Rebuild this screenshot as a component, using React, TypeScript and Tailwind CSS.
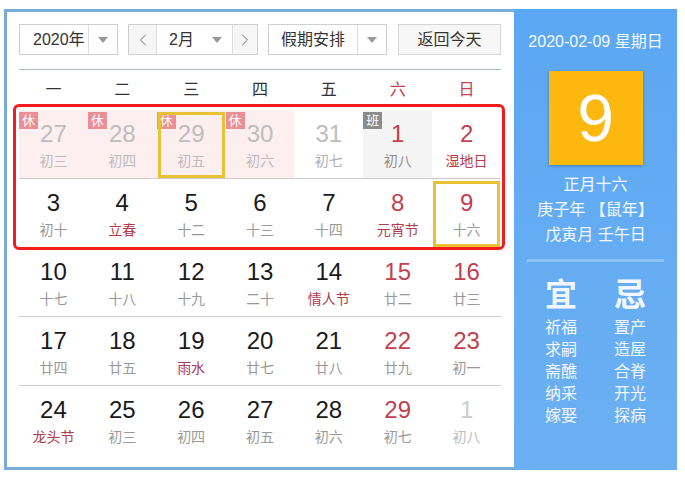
import React from "react";
import { ChevronLeft, ChevronRight } from "lucide-react";

type Cell = {
  d: string;
  l: string;
  num?: string;
  lun?: string;
  bg?: string;
  badge?: "休" | "班";
  sel?: boolean;
};

const G = "text-[#bdbdbd]";
const R = "text-[#c2404f]";
const LR = "text-[#b43a4c]";
const LG = "text-[#999999]";

const rows: Cell[][] = [
  [
    { d: "27", l: "初三", num: G, lun: "text-[#bcbcbc]", bg: "bg-[#fdeef0]", badge: "休" },
    { d: "28", l: "初四", num: G, lun: "text-[#bcbcbc]", bg: "bg-[#fdeef0]", badge: "休" },
    { d: "29", l: "初五", num: G, lun: "text-[#bcbcbc]", bg: "bg-[#fdeef0]", badge: "休", sel: true },
    { d: "30", l: "初六", num: G, lun: "text-[#bcbcbc]", bg: "bg-[#fdeef0]", badge: "休" },
    { d: "31", l: "初七", num: G, lun: "text-[#b0b0b0]" },
    { d: "1", l: "初八", num: R, lun: "text-[#8f8f8f]", bg: "bg-[#f4f4f4]", badge: "班" },
    { d: "2", l: "湿地日", num: R, lun: LR },
  ],
  [
    { d: "3", l: "初十" },
    { d: "4", l: "立春", lun: LR },
    { d: "5", l: "十二" },
    { d: "6", l: "十三" },
    { d: "7", l: "十四" },
    { d: "8", l: "元宵节", num: R, lun: LR },
    { d: "9", l: "十六", num: R, sel: true },
  ],
  [
    { d: "10", l: "十七" },
    { d: "11", l: "十八" },
    { d: "12", l: "十九" },
    { d: "13", l: "二十" },
    { d: "14", l: "情人节", lun: LR },
    { d: "15", l: "廿二", num: R },
    { d: "16", l: "廿三", num: R },
  ],
  [
    { d: "17", l: "廿四" },
    { d: "18", l: "廿五" },
    { d: "19", l: "雨水", lun: "text-[#a83a60]" },
    { d: "20", l: "廿七" },
    { d: "21", l: "廿八" },
    { d: "22", l: "廿九", num: R },
    { d: "23", l: "初一", num: R },
  ],
  [
    { d: "24", l: "龙头节", lun: LR },
    { d: "25", l: "初三" },
    { d: "26", l: "初四" },
    { d: "27", l: "初五" },
    { d: "28", l: "初六" },
    { d: "29", l: "初七", num: R },
    { d: "1", l: "初八", num: "text-[#cccccc]", lun: "text-[#bbbbbb]" },
  ],
];

const weekdays = ["一", "二", "三", "四", "五", "六", "日"];

function Tri() {
  return (
    <svg width="10" height="6" viewBox="0 0 10 6">
      <path d="M0 0 L10 0 L5 6 Z" fill="#9a9a9a" />
    </svg>
  );
}

export default function App() {
  return (
    <div className="w-[685px] h-[479px] bg-white overflow-hidden font-['Liberation_Sans','Noto_Sans_CJK_SC',sans-serif] text-[#222]">
      <div className="ml-[4px] mt-[9px] flex w-[673px] h-[461px]">
        {/* left panel */}
        <div className="relative w-[510px] h-full border-[3px] border-r-0 border-[#78acd6] pl-[12px] pr-[13px] pt-[12px]">
          {/* toolbar */}
          <div className="flex h-[31px] text-[16px] text-[#333]">
            <div className="flex w-[99px] border border-[#cfcfcf] bg-white">
              <div className="flex w-[69px] items-center pl-[13px] border-r border-[#dddddd]">2020年</div>
              <div className="flex flex-1 items-center justify-center">
                <Tri />
              </div>
            </div>
            <div className="ml-[10px] flex w-[130px] border border-[#cfcfcf] bg-white">
              <div className="flex w-[28px] items-center justify-center border-r border-[#dddddd] bg-[#f6f6f6]">
                <ChevronLeft size={20} strokeWidth={1.2} color="#777" />
              </div>
              <div className="flex w-[75px] items-center pl-[12px] pr-[10px] justify-between">
                <span>2月</span>
                <Tri />
              </div>
              <div className="flex flex-1 items-center justify-center border-l border-[#dddddd] bg-[#f6f6f6]">
                <ChevronRight size={20} strokeWidth={1.2} color="#777" />
              </div>
            </div>
            <div className="ml-[10px] flex w-[119px] border border-[#cfcfcf] bg-white">
              <div className="flex w-[89px] items-center justify-center border-r border-[#dddddd]">假期安排</div>
              <div className="flex flex-1 items-center justify-center">
                <Tri />
              </div>
            </div>
            <div className="ml-[11px] flex w-[103px] items-center justify-center border border-[#d4d4d4] bg-[#f7f7f7]">
              返回今天
            </div>
          </div>
          <div className="mt-[14px] h-px bg-[#a9bfcf]" />
          {/* weekday header */}
          <div className="grid h-[40px] grid-cols-7 items-center text-[16px]">
            {weekdays.map((w, i) => (
              <div key={w} className={`text-center ${i >= 5 ? "text-[#c2404f]" : "text-[#333]"}`}>
                {w}
              </div>
            ))}
          </div>
          {/* day rows */}
          {rows.map((row, ri) => (
            <div
              key={ri}
              className={`grid h-[69px] grid-cols-7 ${ri < rows.length - 1 ? "border-b border-[#cccccc]" : ""}`}
            >
              {row.map((c, ci) => (
                <div key={ci} className={`relative flex flex-col items-center ${c.bg ?? ""}`}>
                  {c.badge && (
                    <div
                      className={`absolute left-0 top-[2px] flex h-[17px] w-[19px] items-center justify-center text-[13px] leading-none text-white ${
                        c.badge === "休" ? "bg-[#ea8f95]" : "bg-[#8c8c8c]"
                      }`}
                    >
                      {c.badge}
                    </div>
                  )}
                  {c.sel && (
                    <div className="absolute inset-x-[1px] top-[2px] bottom-0 border-[3px] border-[#e9c233]" />
                  )}
                  <div className={`mt-[10px] text-[24px] leading-[28px] ${c.num ?? "text-[#1a1a1a]"}`}>{c.d}</div>
                  <div className={`mt-[4px] text-[14px] leading-[18px] ${c.lun ?? LG}`}>{c.l}</div>
                </div>
              ))}
            </div>
          ))}
          {/* red highlight overlay */}
          <div className="pointer-events-none absolute left-[6px] top-[92px] h-[146px] w-[492px] rounded-[6px] border-[3px] border-[#f21c1c]" />
        </div>
        {/* right panel */}
        <div className="flex w-[163px] h-full flex-col items-center bg-gradient-to-b from-[#5ca7f3] to-[#6cb0f2] text-white">
          <div className="mt-[23px] text-[16px] leading-[20px] text-[#f4f9ff]">2020-02-09 星期日</div>
          <div className="mt-[19px] flex h-[94px] w-[94px] items-center justify-center bg-[#fdb80f] shadow-[0_1px_3px_rgba(0,0,0,0.25)]">
            <span className="text-[66px] leading-none text-white">9</span>
          </div>
          <div className="mt-[7px] flex flex-col items-center text-[16px] leading-[25px] text-[#f4f9ff]">
            <div>正月十六</div>
            <div>庚子年 【鼠年】</div>
            <div>戊寅月 壬午日</div>
          </div>
          <div className="mt-[12px] h-[3px] w-[137px] bg-[#8fc3f6]" />
          <div className="mt-[15px] flex gap-[19px]">
            {[
              { h: "宜", items: ["祈福", "求嗣", "斋醮", "纳采", "嫁娶"] },
              { h: "忌", items: ["置产", "造屋", "合脊", "开光", "探病"] },
            ].map((col) => (
              <div key={col.h} className="flex w-[50px] flex-col items-center">
                <div className="text-[32px] font-bold leading-[36px] text-[#f2f7ff]">{col.h}</div>
                <div className="mt-[4px] flex flex-col items-center text-[16px] leading-[22px] text-[#f2f7ff]">
                  {col.items.map((it) => (
                    <div key={it}>{it}</div>
                  ))}
                </div>
              </div>
            ))}
          </div>
        </div>
      </div>
    </div>
  );
}
